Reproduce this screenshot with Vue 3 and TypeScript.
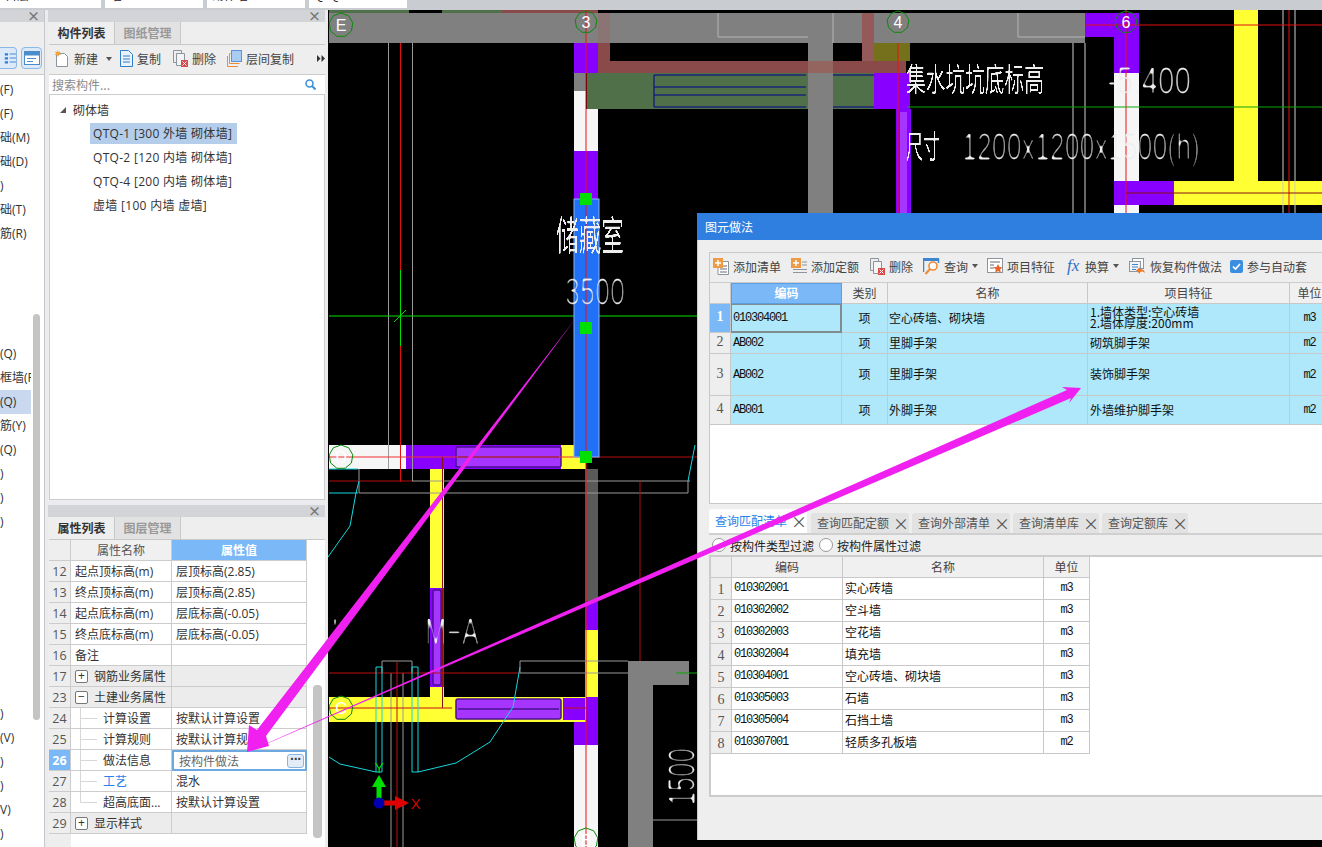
<script setup lang="ts">
type Box = [number, number, number, number, string];
type Seg = [number, number, number, number, string];

const topFields = ["首层", "墙", "砌体墙", "QTQ-1"];

const navRows = [
  "(F)", "(F)", "础(M)", "础(D)", ")", "础(T)", "筋(R)", "", "", "", "",
  "(Q)", "框墙(F", "(Q)", "筋(Y)", "(Q)", ")", ")", ")", "", "", "", "", "", "", "",
  ")", "(V)", ")", ")", "V)", ")",
];

const treeRows = [
  { text: "QTQ-1 [300 外墙 砌体墙]", active: true },
  { text: "QTQ-2 [120 内墙 砌体墙]", active: false },
  { text: "QTQ-4 [200 内墙 砌体墙]", active: false },
  { text: "虚墙 [100 内墙 虚墙]", active: false },
];

const propRows = [
  { no: 12, name: "起点顶标高(m)", value: "层顶标高(2.85)", kind: "plain" },
  { no: 13, name: "终点顶标高(m)", value: "层顶标高(2.85)", kind: "plain" },
  { no: 14, name: "起点底标高(m)", value: "层底标高(-0.05)", kind: "plain" },
  { no: 15, name: "终点底标高(m)", value: "层底标高(-0.05)", kind: "plain" },
  { no: 16, name: "备注", value: "", kind: "plain" },
  { no: 17, name: "钢筋业务属性", value: "", kind: "group", sign: "+" },
  { no: 23, name: "土建业务属性", value: "", kind: "group", sign: "−" },
  { no: 24, name: "计算设置", value: "按默认计算设置", kind: "child" },
  { no: 25, name: "计算规则", value: "按默认计算规则", kind: "child" },
  { no: 26, name: "做法信息", value: "按构件做法", kind: "edit" },
  { no: 27, name: "工艺", value: "混水", kind: "link" },
  { no: 28, name: "超高底面...", value: "按默认计算设置", kind: "last" },
  { no: 29, name: "显示样式", value: "", kind: "group", sign: "+" },
];

const methodRows = [
  { no: 1, code: "010304001", type: "项", name: "空心砖墙、砌块墙", unit: "m3", tall: "r29", lines: ["1.墙体类型:空心砖墙", "2.墙体厚度:200mm"] },
  { no: 2, code: "AB002", type: "项", name: "里脚手架", unit: "m2", tall: "r21", lines: ["砌筑脚手架"] },
  { no: 3, code: "AB002", type: "项", name: "里脚手架", unit: "m2", tall: "r42", lines: ["装饰脚手架"] },
  { no: 4, code: "AB001", type: "项", name: "外脚手架", unit: "m2", tall: "r29", lines: ["外墙维护脚手架"] },
];

const queryTabs = ["查询匹配清单", "查询匹配定额", "查询外部清单", "查询清单库", "查询定额库"];

const queryRows = [
  ["010302001", "实心砖墙", "m3"],
  ["010302002", "空斗墙", "m3"],
  ["010302003", "空花墙", "m3"],
  ["010302004", "填充墙", "m3"],
  ["010304001", "空心砖墙、砌块墙", "m3"],
  ["010305003", "石墙", "m3"],
  ["010305004", "石挡土墙", "m3"],
  ["010307001", "轻质多孔板墙", "m2"],
];

const GRAY = "#808080";
const PURPLE = "#8800ff";
const YELLOW = "#ffff33";
const WHITE = "#f6f6f6";
const BROWN = "#8a4a4a";
const MOSS = "#4f7048";

// plan drawing, in page coordinates
const boxes: Box[] = [
  [329, 10, 80, 3, MOSS],
  [442, 10, 60, 3, MOSS],
  [502, 10, 96, 3, BROWN],
  [329, 13, 756, 30, GRAY],
  [808, 43, 25, 190, GRAY],
  [874, 43, 36, 18, "#75701c"],
  [598, 13, 12, 30, "#8a7474"],
  [598, 43, 12, 30, BROWN],
  [862, 13, 12, 48, "#945a5a"],
  [598, 61, 308, 12, BROWN],
  [808, 61, 25, 12, "#94645f"],
  [587, 73, 287, 36, MOSS],
  [808, 73, 25, 36, GRAY],
  [874, 73, 36, 36, PURPLE],
  [896, 109, 15, 110, PURPLE],
  [900, 112, 7, 106, "#a535ff"],
  [574, 43, 24, 30, PURPLE],
  [574, 73, 12, 18, GRAY],
  [574, 91, 12, 60, WHITE],
  [586, 109, 12, 42, WHITE],
  [574, 151, 24, 48, PURPLE],
  [1085, 13, 29, 24, PURPLE],
  [1114, 13, 25, 60, PURPLE],
  [1114, 73, 25, 108, WHITE],
  [1114, 181, 60, 24, PURPLE],
  [1174, 181, 148, 24, YELLOW],
  [1234, 10, 24, 171, YELLOW],
  [1114, 205, 25, 10, WHITE],
  [329, 445, 77, 24, WHITE],
  [406, 445, 168, 24, PURPLE],
  [561, 445, 25, 24, YELLOW],
  [430, 469, 14, 119, YELLOW],
  [430, 588, 14, 99, PURPLE],
  [430, 687, 14, 10, YELLOW],
  [585, 469, 13, 132, "#5a5a5a"],
  [585, 601, 13, 29, PURPLE],
  [585, 630, 13, 67, YELLOW],
  [329, 697, 257, 25, YELLOW],
  [586, 697, 12, 48, PURPLE],
  [574, 722, 24, 23, PURPLE],
  [574, 745, 24, 102, WHITE],
  [563, 698, 22, 22, PURPLE],
  [628, 661, 61, 24, GRAY],
  [628, 661, 25, 186, GRAY],
];

const studs: Box[] = [
  [456, 447, 105, 20, "#a535ff"],
  [456, 699, 105, 20, "#a535ff"],
  [433, 590, 8, 95, "#a535ff"],
];

const lines: Seg[] = [
  [718, 13, 718, 37, "#b5b5b5"],
  [718, 37, 808, 37, "#b5b5b5"],
  [833, 13, 833, 43, "#b5b5b5"],
  [1018, 13, 1018, 37, "#b5b5b5"],
  [1018, 37, 1085, 37, "#b5b5b5"],
  [654, 75, 806, 75, "#00008b"],
  [654, 87, 806, 87, "#00008b"],
  [654, 95, 806, 95, "#00008b"],
  [654, 107, 806, 107, "#00008b"],
  [654, 75, 654, 107, "#00008b"],
  [833, 75, 874, 75, "#00008b"],
  [833, 107, 874, 107, "#00008b"],
  [388.5, 43, 388.5, 469, "#9a9a9a"],
  [412.5, 43, 412.5, 481, "#9a9a9a"],
  [412, 481, 690, 481, "#9a9a9a"],
  [359, 493, 688, 493, "#9a9a9a"],
  [359, 469, 359, 493, "#9a9a9a"],
  [688, 481, 688, 493, "#9a9a9a"],
  [1073, 43, 1073, 215, "#cfcfcf"],
  [1085, 43, 1085, 215, "#cfcfcf"],
  [1283, 10, 1283, 215, "#cfcfcf"],
  [1295, 10, 1295, 215, "#cfcfcf"],
  [382, 661, 412, 661, "#9a9a9a"],
  [382, 661, 382, 673, "#9a9a9a"],
  [412, 661, 412, 673, "#9a9a9a"],
  [391, 673, 391, 847, "#9a9a9a"],
  [403, 673, 403, 847, "#9a9a9a"],
  [520, 661, 628, 661, "#9a9a9a"],
  [520, 673, 628, 673, "#9a9a9a"],
  [520, 661, 520, 673, "#9a9a9a"],
  [653, 820, 697, 820, "#9a9a9a"],
  [400.5, 43, 400.5, 482, "#e01010"],
  [586, 10, 586, 847, "#f01010"],
  [898, 43, 898, 215, "#f01010"],
  [1126, 10, 1126, 215, "#f01010"],
  [1289, 10, 1289, 215, "#e01010"],
  [1085, 25, 1322, 25, "#e01010"],
  [1126, 193, 1322, 193, "#8a0f0f"],
  [329, 457, 586, 457, "#f03030"],
  [586, 457, 697, 457, "#b00c0c"],
  [329, 481, 412, 481, "#b00c0c"],
  [640, 481, 640, 661, "#b00c0c"],
  [442.5, 457, 442.5, 708, "#8a0f0f"],
  [329, 708, 452, 708, "#c01010"],
  [563, 708, 586, 708, "#c01010"],
  [329, 673, 520, 673, "#c01010"],
  [397, 662, 397, 847, "#c01010"],
  [329, 316, 1322, 316, "#00e000"],
  [400.5, 270, 400.5, 346, "#00e000"],
  [394, 322, 406, 310, "#00e000"],
  [907, 107, 1322, 107, "#0ba50b"],
  [676, 673, 697, 673, "#0ba50b"],
];

const cyanPaths = [
  "M328 557 350 526 356 493 359 481",
  "M329 469H358M329 493H358",
  "M688 481 695 445",
  "M520 667 513 707 490 742 456 763 418 772H412V667H418V772",
  "M329 757 340 764 376 772H382V667H376V772",
];

const axisBubbles = [
  { x: 341, y: 25, r: 12, label: "E" },
  { x: 586, y: 22, r: 11, label: "3" },
  { x: 898, y: 22, r: 11, label: "4" },
  { x: 1126, y: 22, r: 11, label: "6" },
  { x: 341, y: 457, r: 12, label: "D" },
  { x: 341, y: 708, r: 12, label: "C" },
  { x: 586, y: 840, r: 12, label: "B" },
];

// the CAD bubbles are coarse polygons rather than true circles
function octagon(x: number, y: number, r: number) {
  const pts: string[] = [];
  for (let i = 0; i < 9; i++) {
    const a = (i * Math.PI * 2) / 9 - Math.PI / 2;
    pts.push(`${(x + r * Math.cos(a)).toFixed(1)},${(y + r * Math.sin(a)).toFixed(1)}`);
  }
  return pts.join(" ");
}
</script>

<template>
  <div class="screen">
    <header class="topbar">
      <div v-for="field in topFields" :key="field" class="top-field"><span>{{ field }}</span></div>
    </header>

    <div class="workspace">
      <aside class="nav-panel">
        <div class="panel-head"><span class="panel-close">×</span></div>
        <div class="nav-tools">
          <span class="nav-tool">
            <svg width="20" height="16" viewBox="0 0 20 16">
              <path d="M6 2h4v3H6zM6 7h4v3H6zM6 12h4v3H6z" fill="#2f7fd8" />
              <path d="M12 3h8M12 8h8M12 13h8" stroke="#4b8ccb" stroke-width="1.3" />
            </svg>
          </span>
          <span class="nav-tool">
            <svg width="16" height="14" viewBox="0 0 16 14">
              <rect x=".5" y=".5" width="15" height="13" fill="#fff" stroke="#4b8ccb" />
              <rect x=".5" y=".5" width="15" height="4" fill="#4b8ccb" />
              <path d="M3 7.500h9M3 10.500h6" stroke="#4b8ccb" />
            </svg>
          </span>
        </div>
        <div class="nav-body">
          <ul class="nav-list">
            <li v-for="(row, i) in navRows" :key="i" class="nav-row">
              <span :class="{ 'nav-picked': i === 13 }">{{ row }}</span>
            </li>
          </ul>
          <div class="nav-track"><div class="nav-thumb"></div></div>
        </div>
      </aside>

      <div class="side-column">
        <section class="panel list-panel">
          <div class="panel-head"><span class="panel-close">×</span></div>
          <div class="panel-tabs">
            <span class="panel-tab on">构件列表</span>
            <span class="panel-tab">图纸管理</span>
          </div>
          <div class="list-tools">
            <span class="tool new-tool">
              <svg width="15" height="18" viewBox="0 0 15 18">
                <path d="M2.500 3.500h8l3 3v10h-11z" fill="#fff" stroke="#8c959c" />
                <path d="M3.500 0 4.500 2l2-.6-.8 2 1.600 1.400-2.200.2L4 7 3 5 .6 5l1.400-1.600L1 1.400 3 2z" fill="#f5a23a" />
              </svg>
              新建<i class="caret"></i>
            </span>
            <span class="tool copy-tool">
              <svg width="13" height="17" viewBox="0 0 13 17">
                <path d="M.5.500h8l4 4v12H.5z" fill="#eaf3fb" stroke="#2f7fc8" />
                <path d="M3 6h7M3 9h7M3 12h7" stroke="#2f7fc8" />
              </svg>
              复制
            </span>
            <span class="tool del-tool">
              <svg width="15" height="17" viewBox="0 0 15 17">
                <path d="M.5.500h8v12H.5z" fill="none" stroke="#8c959c" />
                <path d="M3.500 3.500h8v12h-8z" fill="#f4f4f4" stroke="#8c959c" />
                <rect x="8" y="10" width="7" height="7" fill="#d84a4a" />
                <path d="M9.500 11.500l4 4m0-4l-4 4" stroke="#fff" />
              </svg>
              删除
            </span>
            <span class="tool floor-tool">
              <svg width="15" height="17" viewBox="0 0 15 17">
                <rect x="4.500" y=".5" width="10" height="11" fill="#a9ccf2" stroke="#5b93d6" />
                <path d="M3.500 3.500H2.500v10h10M.5 6v10.500H11" fill="none" stroke="#ef8a35" />
              </svg>
              层间复制
            </span>
            <svg class="more" width="8" height="7" viewBox="0 0 8 7">
              <path d="M0 0l3.500 3.500L0 7zM4.500 0 8 3.500 4.500 7z" fill="#333" />
            </svg>
          </div>
          <div class="search-row">
            <span>搜索构件...</span>
            <svg width="11" height="11" viewBox="0 0 11 11">
              <circle cx="4.500" cy="4.500" r="3.500" fill="none" stroke="#3f92d8" stroke-width="1.600" />
              <path d="M7 7l3.500 3.500" stroke="#3f92d8" stroke-width="2" />
            </svg>
          </div>
          <div class="tree">
            <div class="tree-root"><i class="tree-arrow"></i>砌体墙</div>
            <div v-for="row in treeRows" :key="row.text" class="tree-row">
              <span :class="{ 'tree-on': row.active }">{{ row.text }}</span>
            </div>
          </div>
        </section>

        <section class="panel prop-panel">
          <div class="panel-head"><span class="panel-close">×</span></div>
          <div class="panel-tabs">
            <span class="panel-tab on">属性列表</span>
            <span class="panel-tab">图层管理</span>
          </div>
          <div class="prop-body">
            <div class="prop-main">
              <div class="prop-grid">
                <div class="prop-no head-no"></div>
                <div class="prop-title">属性名称</div>
                <div class="prop-title picked">属性值</div>
                <template v-for="row in propRows" :key="row.no">
                  <div class="prop-no" :class="{ hot: row.kind === 'edit' }">{{ row.no }}</div>
                  <div class="prop-name" :class="{ shade: row.kind === 'group', link: row.kind === 'link' }">
                    <span v-if="row.kind === 'group'" class="sign">{{ row.sign }}</span>
                    <span v-if="['child', 'edit', 'link', 'last'].includes(row.kind)" class="branch" :class="{ end: row.kind === 'last' }"></span>
                    {{ row.name }}
                  </div>
                  <div v-if="row.kind === 'edit'" class="prop-edit">
                    {{ row.value }}<span class="dots">···</span>
                  </div>
                  <div v-else class="prop-value" :class="{ shade: row.kind === 'group' }">{{ row.value }}</div>
                </template>
              </div>
              <div class="prop-rest"></div>
            </div>
            <div class="prop-track"><div class="prop-thumb"></div></div>
          </div>
        </section>
      </div>

      <main class="canvas">
        <svg class="plan" width="994" height="837" viewBox="328 10 994 837">
          <defs>
            <filter id="thin-cn" x="-5%" y="-5%" width="110%" height="110%">
              <feGaussianBlur stdDeviation="0.7" />
              <feComponentTransfer>
                <feFuncA type="linear" slope="4" intercept="-1.95" />
              </feComponentTransfer>
            </filter>
            <filter id="thin-num" x="-5%" y="-5%" width="110%" height="110%">
              <feGaussianBlur stdDeviation="0.9" />
              <feComponentTransfer>
                <feFuncA type="linear" slope="4" intercept="-2.2" />
              </feComponentTransfer>
            </filter>
          </defs>
          <rect x="328" y="10" width="994" height="837" fill="#000" />
          <rect v-for="(b, i) in boxes" :key="'b' + i" :x="b[0]" :y="b[1]" :width="b[2]" :height="b[3]" :fill="b[4]" />
          <rect v-for="(b, i) in studs" :key="'s' + i" :x="b[0]" :y="b[1]" :width="b[2]" :height="b[3]" :fill="b[4]" stroke="#4a1090" stroke-width="1.500" rx="2" />
          <path d="M458 457h101M458 709h101" stroke="#4a1090" stroke-width="1.500" />
          <line v-for="(l, i) in lines" :key="'l' + i" :x1="l[0]" :y1="l[1]" :x2="l[2]" :y2="l[3]" :stroke="l[4]" />
          <path v-for="d in cyanPaths" :key="d" :d="d" fill="none" stroke="#14d8e0" />

          <rect x="574" y="199" width="25" height="258" fill="#2070f8" stroke="#8ab4f0" />
          <line x1="586" y1="199" x2="586" y2="457" stroke="#f01010" />
          <rect x="580" y="193" width="12" height="12" fill="#00e000" />
          <rect x="580" y="322" width="12" height="12" fill="#00e000" />
          <rect x="580" y="451" width="12" height="12" fill="#00e000" />

          <g v-for="a in axisBubbles" :key="a.label">
            <polygon :points="octagon(a.x, a.y, a.r)" fill="none" stroke="#0a8a0a" />
            <text :x="a.x" :y="a.y + 6" class="bubble">{{ a.label }}</text>
          </g>

          <g filter="url(#thin-cn)">
            <text x="556" y="250" class="cad-cn" textLength="68" lengthAdjust="spacingAndGlyphs">储藏室</text>
            <text x="906" y="91" class="cad-cn small" textLength="138" lengthAdjust="spacingAndGlyphs">集水坑坑底标高</text>
            <text x="906" y="158" class="cad-cn small" textLength="34" lengthAdjust="spacingAndGlyphs">尺寸</text>
          </g>
          <g filter="url(#thin-num)">
            <text x="565" y="305" class="cad-num" textLength="60" lengthAdjust="spacingAndGlyphs">3500</text>
            <text x="425" y="645" class="cad-num" textLength="54" lengthAdjust="spacingAndGlyphs">M−A</text>
            <text x="329" y="645" class="cad-num" textLength="12" lengthAdjust="spacingAndGlyphs">A</text>
            <text x="1107" y="94" class="cad-num" textLength="84" lengthAdjust="spacingAndGlyphs">-5.400</text>
            <text x="962" y="160" class="cad-num" textLength="238" lengthAdjust="spacingAndGlyphs">1200x1200x1500(h)</text>
            <text x="695" y="806" transform="rotate(-90 695 806)" class="cad-num" textLength="58" lengthAdjust="spacingAndGlyphs">1500</text>
          </g>

          <path d="M379 803v-16" stroke="#00e000" stroke-width="5" />
          <path d="M372 787h14l-7-12z" fill="#00e000" />
          <path d="M379 803h16" stroke="#e00000" stroke-width="5" />
          <path d="M395 796v14l14-7z" fill="#e00000" />
          <circle cx="379" cy="803" r="5.500" fill="#0000b0" />
          <text x="374.500" y="773" class="axis-y">Y</text>
          <text x="411" y="809" class="axis-x">X</text>
        </svg>
      </main>
    </div>

    <section class="dialog">
      <div class="dialog-title">图元做法</div>
      <div class="dialog-body">
        <div class="method-box">
          <div class="method-tools">
            <span class="tool m1">
              <svg width="16" height="17" viewBox="0 0 16 17">
                <path d="M5 3.500h10.500v13H5z" fill="#fff" stroke="#8c959c" />
                <path d="M7 8h7M7 11h7M7 14h7" stroke="#667" />
                <rect width="10" height="10" fill="#ef9a45" />
                <path d="M5 2v6M2 5h6" stroke="#fff" stroke-width="1.500" />
              </svg>
              添加清单
            </span>
            <span class="tool m2">
              <svg width="16" height="17" viewBox="0 0 16 17">
                <path d="M11 4h5M11 7h5M2 11.500h14M2 14.500h14" stroke="#8c959c" />
                <rect width="10" height="10" fill="#ef9a45" />
                <path d="M5 2v6M2 5h6" stroke="#fff" stroke-width="1.500" />
              </svg>
              添加定额
            </span>
            <span class="tool m3">
              <svg width="15" height="17" viewBox="0 0 15 17">
                <path d="M.5.500h8v12H.5z" fill="none" stroke="#8c959c" />
                <path d="M3.500 3.500h8v12h-8z" fill="#f4f4f4" stroke="#8c959c" />
                <rect x="8" y="10" width="7" height="7" fill="#d84a4a" />
                <path d="M9.500 11.500l4 4m0-4l-4 4" stroke="#fff" />
              </svg>
              删除
            </span>
            <span class="tool m4">
              <svg width="17" height="17" viewBox="0 0 17 17">
                <path d="M.5 14V1.500h15V5" fill="none" stroke="#3c85d0" stroke-width="1.500" />
                <rect y="0" width="16" height="3" fill="#3c85d0" />
                <circle cx="10" cy="8" r="4" fill="#fff" stroke="#ef8a35" stroke-width="1.600" />
                <path d="M7 11l-4.500 5" stroke="#ef8a35" stroke-width="2.200" />
              </svg>
              查询<i class="caret tight"></i>
            </span>
            <span class="tool m5">
              <svg width="16" height="16" viewBox="0 0 16 16">
                <rect x=".5" y=".5" width="15" height="14" fill="#fff" stroke="#8c959c" />
                <path d="M3 4h10M3 7h4M3 10h4" stroke="#667" />
                <path d="M11 6l1.500 3 3 .3-2.300 2.200.7 3.200-2.900-1.600-2.900 1.600.7-3.200L6.500 9.300l3-.3z" fill="#e8642c" />
              </svg>
              项目特征
            </span>
            <span class="tool m6"><i class="fx">fx</i>换算<i class="caret tight"></i></span>
            <span class="tool m7">
              <svg width="17" height="17" viewBox="0 0 17 17">
                <rect x="3.500" y=".5" width="11" height="10" fill="#fff" stroke="#8c959c" />
                <rect x=".5" y="3.500" width="11" height="10" fill="#f4f4f4" stroke="#8c959c" />
                <path d="M3 6.500h6M3 9h6M3 11.500h4" stroke="#3c85d0" />
                <path d="M16 15a5 5 0 0 0-5-4v-2l-4 3.500 4 3.500v-2a4 4 0 0 1 5 1z" fill="#ef7a2c" />
              </svg>
              恢复构件做法
            </span>
            <span class="tool m8">
              <svg width="13" height="13" viewBox="0 0 13 13">
                <rect width="13" height="13" rx="2" fill="#3c8ee0" />
                <path d="M3 6.500l2.500 2.500L10 4" fill="none" stroke="#fff" stroke-width="1.700" />
              </svg>
              参与自动套
            </span>
          </div>

          <div class="method-grid">
            <div class="cell head idx"></div>
            <div class="cell head picked">编码</div>
            <div class="cell head">类别</div>
            <div class="cell head">名称</div>
            <div class="cell head">项目特征</div>
            <div class="cell head">单位</div>
            <template v-for="row in methodRows" :key="row.no">
              <div class="cell idx" :class="[row.tall, { hot: row.no === 1 }]">{{ row.no }}</div>
              <div class="cell blue mono left" :class="{ focus: row.no === 1 }">{{ row.code }}</div>
              <div class="cell blue sim">{{ row.type }}</div>
              <div class="cell blue sim left wide">{{ row.name }}</div>
              <div class="cell blue sim left stack">
                <span v-for="line in row.lines" :key="line">{{ line }}</span>
              </div>
              <div class="cell blue mono">{{ row.unit }}</div>
            </template>
          </div>
        </div>

        <div class="query-tabs">
          <span v-for="(tab, i) in queryTabs" :key="tab" class="query-tab" :class="{ on: i === 0 }">
            {{ tab }}<i class="tab-x">×</i>
          </span>
        </div>
        <div class="filter-row">
          <label class="radio-label"><i class="radio"></i>按构件类型过滤</label>
          <label class="radio-label"><i class="radio"></i>按构件属性过滤</label>
        </div>
        <div class="query-box">
          <div class="query-grid">
            <div class="cell head idx"></div>
            <div class="cell head">编码</div>
            <div class="cell head">名称</div>
            <div class="cell head">单位</div>
            <template v-for="(row, i) in queryRows" :key="row[0]">
              <div class="cell idx tall">{{ i + 1 }}</div>
              <div class="cell white mono left top">{{ row[0] }}</div>
              <div class="cell white sim left top">{{ row[1] }}</div>
              <div class="cell white mono top">{{ row[2] }}</div>
            </template>
          </div>
        </div>
      </div>
    </section>

    <svg class="pointers" width="1322" height="847" viewBox="0 0 1322 847">
      <polygon points="576,318 266,736 269,746 247,752 249,725 257,730" fill="#f020f0" />
      <polygon points="245,753 1067,390 1062,387 1081,388 1069,403 1071,398" fill="#f020f0" />
    </svg>
  </div>
</template>

<style>
html,
body {
  margin: 0;
  background: #c9ccd1;
}
</style>

<style scoped>
.screen {
  position: relative;
  width: 1322px;
  height: 847px;
  overflow: hidden;
  display: flex;
  flex-direction: column;
  background: #ececee;
  font-family: "Noto Sans CJK SC", sans-serif;
  font-size: 12px;
  color: #333;
}

.topbar {
  height: 10px;
  flex: none;
  display: flex;
  gap: 4px;
  background: #c9ccd1;
  overflow: hidden;
}

.top-field {
  width: 98px;
  height: 8px;
  background: #fff;
  padding-left: 5px;
  box-sizing: border-box;
  color: #222;
  overflow: hidden;
}

.top-field:first-child {
  width: 101px;
}

.top-field span {
  display: block;
  margin-top: -14px;
  line-height: 18px;
}

.workspace {
  flex: 1;
  display: flex;
  min-height: 0;
}

.panel-head {
  height: 12px;
  flex: none;
  background: #d2d4d8;
  display: flex;
  justify-content: flex-end;
  align-items: center;
  padding-right: 4px;
}

.panel-close {
  font-size: 13px;
  line-height: 12px;
  color: #777;
  font-weight: bold;
}

.nav-panel {
  width: 44px;
  flex: none;
  display: flex;
  flex-direction: column;
  background: #fff;
  border-right: 1px solid #c4c6ca;
  overflow: hidden;
}

.nav-tools {
  height: 53px;
  box-sizing: border-box;
  padding: 25px 0 5px;
  display: flex;
  gap: 4px;
  background: #eee;
  border-bottom: 1px solid #ccc;
  flex: none;
}

.nav-tool {
  width: 21px;
  height: 22px;
  border: 1px solid #8bb8e8;
  border-radius: 4px;
  background: #dbe9f8;
  display: flex;
  align-items: center;
  justify-content: center;
  flex: none;
  overflow: hidden;
  box-sizing: border-box;
}

.nav-tool:first-child {
  width: 17px;
  border-left: 0;
  border-radius: 0 4px 4px 0;
  justify-content: flex-end;
}

.nav-body {
  flex: 1;
  display: flex;
  min-height: 0;
}

.nav-list {
  list-style: none;
  margin: 3px 0 0;
  padding: 0;
  width: 31px;
  flex: none;
  overflow: hidden;
}

.nav-row {
  height: 24px;
  line-height: 24px;
  font-family: "Open Sans", "Noto Sans CJK SC", sans-serif;
  white-space: nowrap;
}

.nav-picked {
  display: block;
  background: #c9d8ee;
}

.nav-track {
  width: 12px;
  padding: 239px 3px 0 2px;
  box-sizing: border-box;
}

.nav-thumb {
  height: 406px;
  border-radius: 4px;
  background: #c4c4c4;
}

.side-column {
  width: 277px;
  flex: none;
  margin: 0 3px;
  display: flex;
  flex-direction: column;
  gap: 5px;
}

.panel {
  display: flex;
  flex-direction: column;
  background: #eee;
  overflow: hidden;
}

.list-panel {
  height: 490px;
  flex: none;
}

.prop-panel {
  flex: 1;
  min-height: 0;
}

.panel-tabs {
  height: 22px;
  flex: none;
  display: flex;
  border-bottom: 1px solid #c8c8c8;
  margin-left: 1px;
}

.panel-tab {
  width: 65px;
  text-align: center;
  line-height: 22px;
  font-weight: bold;
  color: #999;
  background: #e2e2e2;
  border-right: 1px solid #c8c8c8;
}

.panel-tab.on {
  background: #eee;
  color: #333;
}

.list-tools {
  height: 30px;
  flex: none;
  display: flex;
  align-items: center;
  border-bottom: 1px solid #ccc;
  margin-left: 1px;
  padding-bottom: 2px;
  box-sizing: border-box;
}

.tool {
  display: inline-flex;
  align-items: center;
  gap: 4px;
  white-space: nowrap;
  color: #444;
}

.new-tool {
  margin-left: 5px;
  width: 66px;
  gap: 5px;
}

.copy-tool {
  width: 53px;
}

.del-tool {
  width: 54px;
}

.floor-tool {
  width: 90px;
}

.caret {
  width: 0;
  height: 0;
  border: 3px solid transparent;
  border-top: 4px solid #555;
  border-bottom: 0;
  margin-left: 3px;
}

.caret.tight {
  margin-left: 0;
}

.search-row {
  height: 19px;
  flex: none;
  background: #fff;
  display: flex;
  align-items: center;
  justify-content: space-between;
  padding: 0 9px 0 3px;
  margin-left: 1px;
  color: #8a8a8a;
  border-bottom: 1px solid #ccc;
}

.tree {
  flex: 1;
  background: #fff;
  border: 1px solid #ccc;
  border-top: 0;
  margin-left: 1px;
  padding-top: 3px;
}

.tree-root {
  height: 23px;
  line-height: 24px;
  padding-left: 10px;
  display: flex;
  align-items: center;
  gap: 7px;
}

.tree-arrow {
  width: 0;
  height: 0;
  border-left: 6px solid transparent;
  border-bottom: 6px solid #555;
}

.tree-row {
  height: 24px;
  display: flex;
  align-items: center;
  padding-left: 40px;
}

.tree-row span {
  padding: 0 5px 0 3px;
  line-height: 21px;
  font-family: "Open Sans", "Noto Sans CJK SC", sans-serif;
  letter-spacing: 0.3px;
  white-space: nowrap;
}

.tree-on {
  background: #b4cdea;
}

.prop-body {
  flex: 1;
  display: flex;
  min-height: 0;
  background: #fff;
  margin-left: 1px;
}

.prop-main {
  width: 258px;
  flex: none;
  display: flex;
  flex-direction: column;
}

.prop-grid {
  display: grid;
  grid-template-columns: 22px 101px 135px;
  grid-auto-rows: 21px;
}

.prop-grid > div {
  box-sizing: border-box;
  border-right: 1px solid #ccc;
  border-bottom: 1px solid #ccc;
  line-height: 22px;
  white-space: nowrap;
  overflow: hidden;
}

.prop-no {
  background: #eee;
  text-align: center;
  color: #555;
  font-family: "Open Sans", sans-serif;
  font-size: 12.500px;
}

.prop-no.hot {
  background: #7ab8f8;
  color: #fff;
  font-weight: bold;
}

.prop-grid > .prop-title {
  background: #f0f0f0;
  text-align: center;
  color: #555;
  line-height: 20px;
}

.prop-grid > .prop-title.picked {
  background: #7ab8f8;
  color: #fff;
  font-weight: bold;
}

.prop-name {
  padding-left: 4px;
  display: flex;
  align-items: center;
  gap: 6px;
  font-family: "Open Sans", "Noto Sans CJK SC", sans-serif;
  padding-top: 1px;
}

.prop-value {
  padding-left: 4px;
  font-family: "Open Sans", "Noto Sans CJK SC", sans-serif;
}

.shade {
  background: #ececec;
}

.link {
  color: #2a7fe8;
}

.sign {
  width: 11px;
  height: 11px;
  line-height: 10px;
  text-align: center;
  border: 1px solid #777;
  border-radius: 2px;
  background: #fff;
  font-size: 12px;
  flex: none;
}

.branch {
  width: 17px;
  align-self: stretch;
  margin-left: 5px;
  margin-top: -1px;
  flex: none;
  background:
    linear-gradient(#d8d8d8, #d8d8d8) left top / 1px 100% no-repeat,
    linear-gradient(#d8d8d8, #d8d8d8) left center / 100% 1px no-repeat;
}

.branch.end {
  background:
    linear-gradient(#d8d8d8, #d8d8d8) left top / 1px 50% no-repeat,
    linear-gradient(#d8d8d8, #d8d8d8) left center / 100% 1px no-repeat;
}

.prop-grid > .prop-edit {
  border: 2px solid #6ea8e0;
  padding-left: 5px;
  line-height: 19px;
  color: #666;
  display: flex;
  justify-content: space-between;
  align-items: center;
  padding-right: 1px;
  background: #fff;
}

.dots {
  width: 15px;
  height: 12px;
  line-height: 8px;
  border: 1px solid #8ab4e0;
  border-radius: 3px;
  background: #e4edf7;
  text-align: center;
  color: #345;
  font-family: "Liberation Sans", sans-serif;
  font-size: 14px;
  font-weight: bold;
  letter-spacing: -1px;
}

.prop-rest {
  flex: 1;
  width: 22px;
  background: #eee;
}

.prop-track {
  flex: 1;
  padding: 145px 3px 0 6px;
}

.prop-thumb {
  height: 153px;
  border-radius: 4px;
  background: #c4c4c4;
}

.canvas {
  flex: 1;
  overflow: hidden;
  background: #000;
}

.plan {
  display: block;
}

.bubble {
  fill: #fff;
  font-family: "Liberation Sans", sans-serif;
  font-size: 16px;
  text-anchor: middle;
}

.cad-cn {
  fill: #eee;
  font-family: "Noto Sans CJK SC", sans-serif;
  font-size: 40px;
}

.cad-cn.small {
  font-size: 32px;
}

.cad-num {
  fill: #eee;
  font-family: "Liberation Sans", sans-serif;
  font-size: 38px;
}

.axis-y {
  fill: #00e000;
  font-family: "Liberation Sans", sans-serif;
  font-size: 14px;
}

.axis-x {
  fill: #e00000;
  font-family: "Liberation Sans", sans-serif;
  font-size: 15px;
}

.dialog {
  position: absolute;
  left: 697px;
  top: 213px;
  width: 625px;
  height: 627px;
  display: flex;
  flex-direction: column;
  background: #eee;
}

.dialog-title {
  height: 27px;
  flex: none;
  background: #2f7fe0;
  color: #fff;
  font-size: 12px;
  line-height: 27px;
  padding-left: 8px;
}

.dialog-body {
  flex: 1;
  display: flex;
  flex-direction: column;
  padding-left: 11px;
  border-left: 1px solid #c8ccd8;
}

.method-box {
  height: 252px;
  margin-top: 12px;
  flex: none;
  background: #fff;
  border: 1px solid #c8c8c8;
  border-right: 0;
  display: flex;
  flex-direction: column;
  box-sizing: border-box;
}

.method-tools {
  height: 30px;
  flex: none;
  background: #eee;
  display: flex;
  align-items: center;
  white-space: nowrap;
  border-bottom: 1px solid #ccc;
  padding-bottom: 3px;
  box-sizing: border-box;
}

.m1 {
  margin-left: 3px;
  width: 78px;
}

.m2 {
  width: 79px;
}

.m3 {
  width: 53px;
}

.m4 {
  width: 64px;
}

.m5 {
  width: 80px;
}

.m6 {
  width: 62px;
}

.m7 {
  width: 101px;
}

.m8 {
  width: 80px;
}

.fx {
  width: 14px;
  font-family: "Liberation Serif", serif;
  font-size: 17px;
  line-height: 16px;
  color: #2f6fc8;
}

.method-grid {
  display: grid;
  grid-template-columns: 21px 111px 46px 200px 202px 40px;
  width: 620px;
}

.cell {
  box-sizing: border-box;
  border-right: 1px solid #c8c8c8;
  border-bottom: 1px solid #c8c8c8;
  display: flex;
  align-items: center;
  justify-content: center;
  white-space: nowrap;
  overflow: hidden;
  padding-bottom: 2px;
}

.cell.head {
  height: 21px;
  background: #f0f0f0;
  color: #444;
}

.cell.head.picked {
  background: #7ab8f8;
  color: #fff;
  font-weight: bold;
  border: 1px solid #5a9ee0;
}

.cell.idx {
  background: #eee;
  color: #555;
  font-family: "Liberation Serif", serif;
  font-size: 14px;
}

.cell.idx.hot {
  background: #7ab8f8;
  color: #fff;
  font-weight: bold;
}

.r21 {
  height: 21px;
}

.r29 {
  height: 29px;
}

.r42 {
  height: 42px;
}

.blue {
  background: #aee8fa;
  color: #111;
}

.white {
  background: #fff;
  color: #111;
}

.mono {
  font-family: "Liberation Mono", monospace;
  font-size: 12px;
  letter-spacing: -1.200px;
}

.blue.mono {
  padding-bottom: 0;
}

.sim {
  font-family: "Noto Sans CJK SC", sans-serif;
  font-size: 12px;
}

.left {
  justify-content: flex-start;
  padding-left: 2px;
}

.left.wide {
  padding-left: 1px;
}

.stack {
  flex-direction: column;
  align-items: flex-start;
  justify-content: center;
  line-height: 11px;
}

.focus {
  border: 2px solid #7f8c90;
  border-left-width: 1px;
  border-top-width: 1px;
  padding-left: 1px;
}

.query-tabs {
  height: 24px;
  margin-top: 5px;
  flex: none;
  display: flex;
  align-items: flex-end;
  gap: 3px;
  border-bottom: 2px solid #d0d0d0;
}

.query-tab {
  height: 20px;
  line-height: 20px;
  padding: 0 4px 0 6px;
  display: inline-flex;
  gap: 4px;
  background: #e2e2e2;
  border-radius: 3px 3px 0 0;
  color: #555;
  white-space: nowrap;
}

.query-tab.on {
  height: 24px;
  line-height: 24px;
  background: #fff;
  color: #2a7fe8;
  margin-right: 1px;
}

.tab-x {
  width: 12px;
  text-align: center;
  font-style: normal;
  font-size: 16px;
  color: #555;
}

.filter-row {
  height: 20px;
  flex: none;
  display: flex;
  align-items: center;
  gap: 5px;
  padding-left: 3px;
  border-bottom: 2px solid #ccc;
}

.radio-label {
  display: inline-flex;
  align-items: center;
  gap: 4px;
  color: #222;
}

.radio {
  width: 12px;
  height: 12px;
  border: 1px solid #999;
  border-radius: 50%;
  background: #fff;
}

.query-box {
  height: 240px;
  flex: none;
  background: #fff;
  border-left: 2px solid #ccc;
  border-bottom: 2px solid #ccc;
  box-sizing: border-box;
}

.query-grid {
  display: grid;
  grid-template-columns: 21px 111px 201px 46px;
  width: 379px;
}

.cell.tall {
  height: 22px;
  padding: 2px 0 0;
}

.top {
  height: 22px;
}

.pointers {
  position: absolute;
  left: 0;
  top: 0;
  pointer-events: none;
}
</style>
